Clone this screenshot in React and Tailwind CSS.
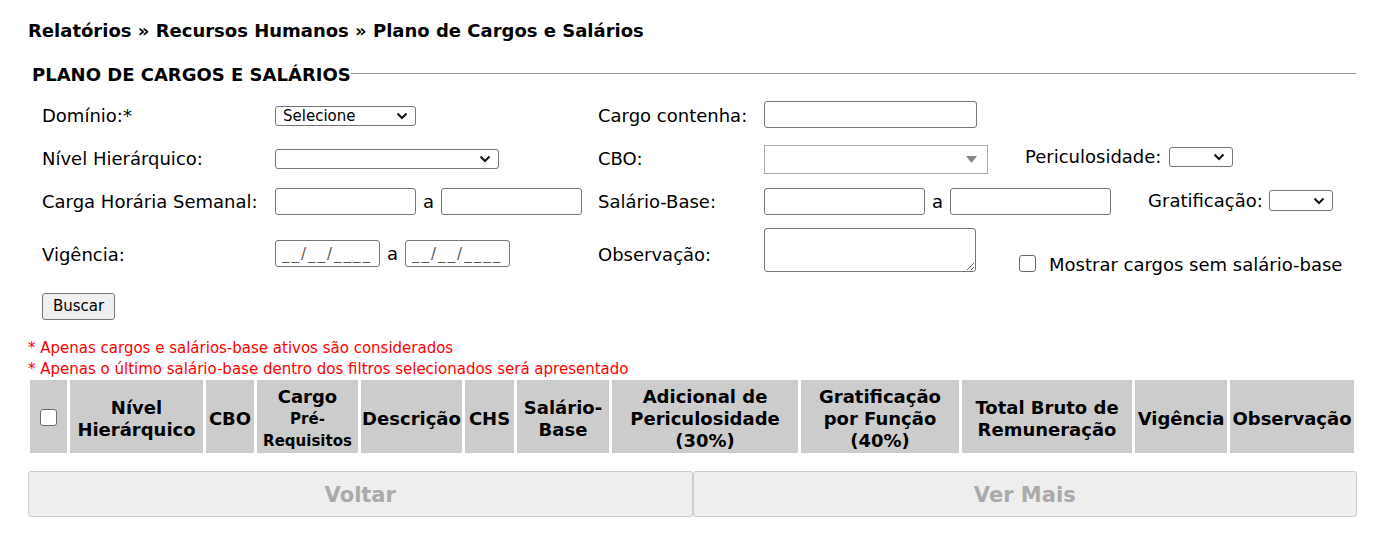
import React from "react";

const font = "font-['DejaVu_Sans',sans-serif]";

const Chevron = () => (
  <svg width="12" height="8" viewBox="0 0 12 8" className="shrink-0">
    <path d="M1.5 1.5 L6 6 L10.5 1.5" fill="none" stroke="#111" strokeWidth="2" />
  </svg>
);

const FakeSelect = ({ className, text }) => (
  <div
    className={`flex items-center justify-between border border-[#767676] rounded-[3px] bg-white px-[7px] text-[15px] leading-[18px] text-black ${className}`}
  >
    <span>{text}</span>
    <Chevron />
  </div>
);

const TextBox = ({ className, value }) => (
  <input
    type="text"
    readOnly
    value={value || ""}
    className={`border border-[#767676] rounded-[3px] bg-white px-[6px] text-[15px] text-[#555] ${className}`}
  />
);

const CheckBox = ({ className }) => (
  <span
    role="checkbox"
    aria-checked="false"
    className={`inline-block shrink-0 w-[17px] h-[17px] border border-[#6b6b6b] rounded-[3px] bg-white ${className || ""}`}
  />
);

const Label = ({ children }) => <span className="text-[18px] text-black">{children}</span>;

const headers = [
  { w: "w-[133px]", label: ["Nível", "Hierárquico"] },
  { w: "w-[48px]", label: ["CBO"] },
  { w: "w-[101px]", label: "cargo" },
  { w: "w-[101px]", label: ["Descrição"] },
  { w: "w-[49px]", label: ["CHS"] },
  { w: "w-[92px]", label: ["Salário-", "Base"] },
  { w: "w-[186px]", label: ["Adicional de", "Periculosidade", "(30%)"] },
  { w: "w-[158px]", label: ["Gratificação", "por Função", "(40%)"] },
  { w: "w-[170px]", label: ["Total Bruto de", "Remuneração"] },
  { w: "w-[92px]", label: ["Vigência"] },
  { w: "w-[124px]", label: ["Observação"] },
];

export default function App() {
  return (
    <div className={`${font} bg-white w-[1400px] h-[543px] px-[28px] pt-[20px] text-black`}>
      <h1 className="text-[18px] font-bold leading-[22px]">
        Relatórios » Recursos Humanos » Plano de Cargos e Salários
      </h1>

      <div className="flex items-center mt-[22px] h-[20px] mr-[16px]">
        <span className="pl-[4px] text-[18px] font-bold">PLANO DE CARGOS E SALÁRIOS</span>
        <div className="flex-1 h-px bg-[#999] mt-[-2px]" />
      </div>

      <div className="pl-[14px] mt-[10px] grid grid-cols-[233px_323px_166px_1fr] grid-rows-[43px_43px_43px_58px] items-center">
        {/* row 1 */}
        <Label>Domínio:*</Label>
        <div className="flex">
          <FakeSelect className="w-[141px] h-[20px]" text="Selecione" />
        </div>
        <Label>Cargo contenha:</Label>
        <div className="flex">
          <TextBox className="w-[213px] h-[27px] mt-[-2px]" />
        </div>

        {/* row 2 */}
        <Label>Nível Hierárquico:</Label>
        <div className="flex">
          <FakeSelect className="w-[224px] h-[20px]" text="" />
        </div>
        <Label>CBO:</Label>
        <div className="flex items-center">
          <div className="w-[224px] h-[29px] border border-[#aaa] bg-white flex items-center justify-end pr-[10px] mt-[1px]">
            <svg width="11" height="7" viewBox="0 0 11 7">
              <path d="M0 0 H11 L5.5 7 Z" fill="#888" />
            </svg>
          </div>
          <span className="ml-[37px] mr-[8px] text-[18px] mt-[-4px]">Periculosidade:</span>
          <FakeSelect className="w-[64px] h-[20px] mt-[-4px]" text="" />
        </div>

        {/* row 3 */}
        <Label>Carga Horária Semanal:</Label>
        <div className="flex items-center">
          <TextBox className="w-[141px] h-[27px]" />
          <span className="text-[18px] mx-[7px]">a</span>
          <TextBox className="w-[141px] h-[27px]" />
        </div>
        <Label>Salário-Base:</Label>
        <div className="flex items-center">
          <TextBox className="w-[161px] h-[27px]" />
          <span className="text-[18px] mx-[7px]">a</span>
          <TextBox className="w-[161px] h-[27px]" />
          <span className="ml-[37px] mr-[6px] text-[18px] mt-[-2px]">Gratificação:</span>
          <FakeSelect className="w-[64px] h-[21px] mt-[-2px]" text="" />
        </div>

        {/* row 4 */}
        <span className="text-[18px] mt-[4px]">Vigência:</span>
        <div className="flex items-center mt-[3px]">
          <TextBox className="w-[105px] h-[27px] tracking-[2px]" value="__/__/____" />
          <span className="text-[18px] mx-[7px]">a</span>
          <TextBox className="w-[105px] h-[27px] tracking-[2px]" value="__/__/____" />
        </div>
        <span className="text-[18px] mt-[4px]">Observação:</span>
        <div className="flex items-start">
          <textarea
            readOnly
            className="w-[212px] h-[44px] border border-[#767676] rounded-[3px] bg-white mt-[-2px]"
          />
          <label className="flex items-end ml-[43px] mt-[24px]">
            <CheckBox className="mb-[3px]" />
            <span className="ml-[13px] text-[18px] leading-[21px]">Mostrar cargos sem salário-base</span>
          </label>
        </div>
      </div>

      <div className="pl-[14px] mt-[12px]">
        <button className="h-[27px] px-[10px] bg-[#efefef] border border-[#767676] rounded-[3px] text-[15px]">
          Buscar
        </button>
      </div>

      <div className="mt-[18px] text-[15px] leading-[21px] text-[#f00]">
        <p>* Apenas cargos e salários-base ativos são considerados</p>
        <p>* Apenas o último salário-base dentro dos filtros selecionados será apresentado</p>
      </div>

      <table className="mt-[-3px] border-separate border-spacing-[3px] table-fixed w-[1330px] -ml-[1px]">
        <thead>
          <tr className="h-[73px]">
            <th className="w-[37px] bg-[#ccc] p-0 align-middle">
              <div className="flex justify-center pt-[2px]">
                <CheckBox />
              </div>
            </th>
            {headers.map((h, i) => (
              <th
                key={i}
                className={`${h.w} bg-[#ccc] p-0 pt-[4px] text-center align-middle text-[18px] font-bold leading-[22px]`}
              >
                {h.label === "cargo" ? (
                  <>
                    <div>Cargo</div>
                    <div className="text-[15px] leading-[22px]">
                      Pré-
                      <br />
                      Requisitos
                    </div>
                  </>
                ) : (
                  h.label.map((l, j) => <div key={j}>{l}</div>)
                )}
              </th>
            ))}
          </tr>
        </thead>
      </table>

      <div className="flex mt-[15px] w-[1329px]">
        <button className="flex-1 h-[46px] pt-[3px] bg-[#eee] border border-[#ccc] rounded-[3px] text-[21px] font-bold text-[#aaa]">
          Voltar
        </button>
        <button className="flex-1 h-[46px] pt-[3px] bg-[#eee] border border-[#ccc] rounded-[3px] text-[21px] font-bold text-[#aaa]">
          Ver Mais
        </button>
      </div>
    </div>
  );
}
